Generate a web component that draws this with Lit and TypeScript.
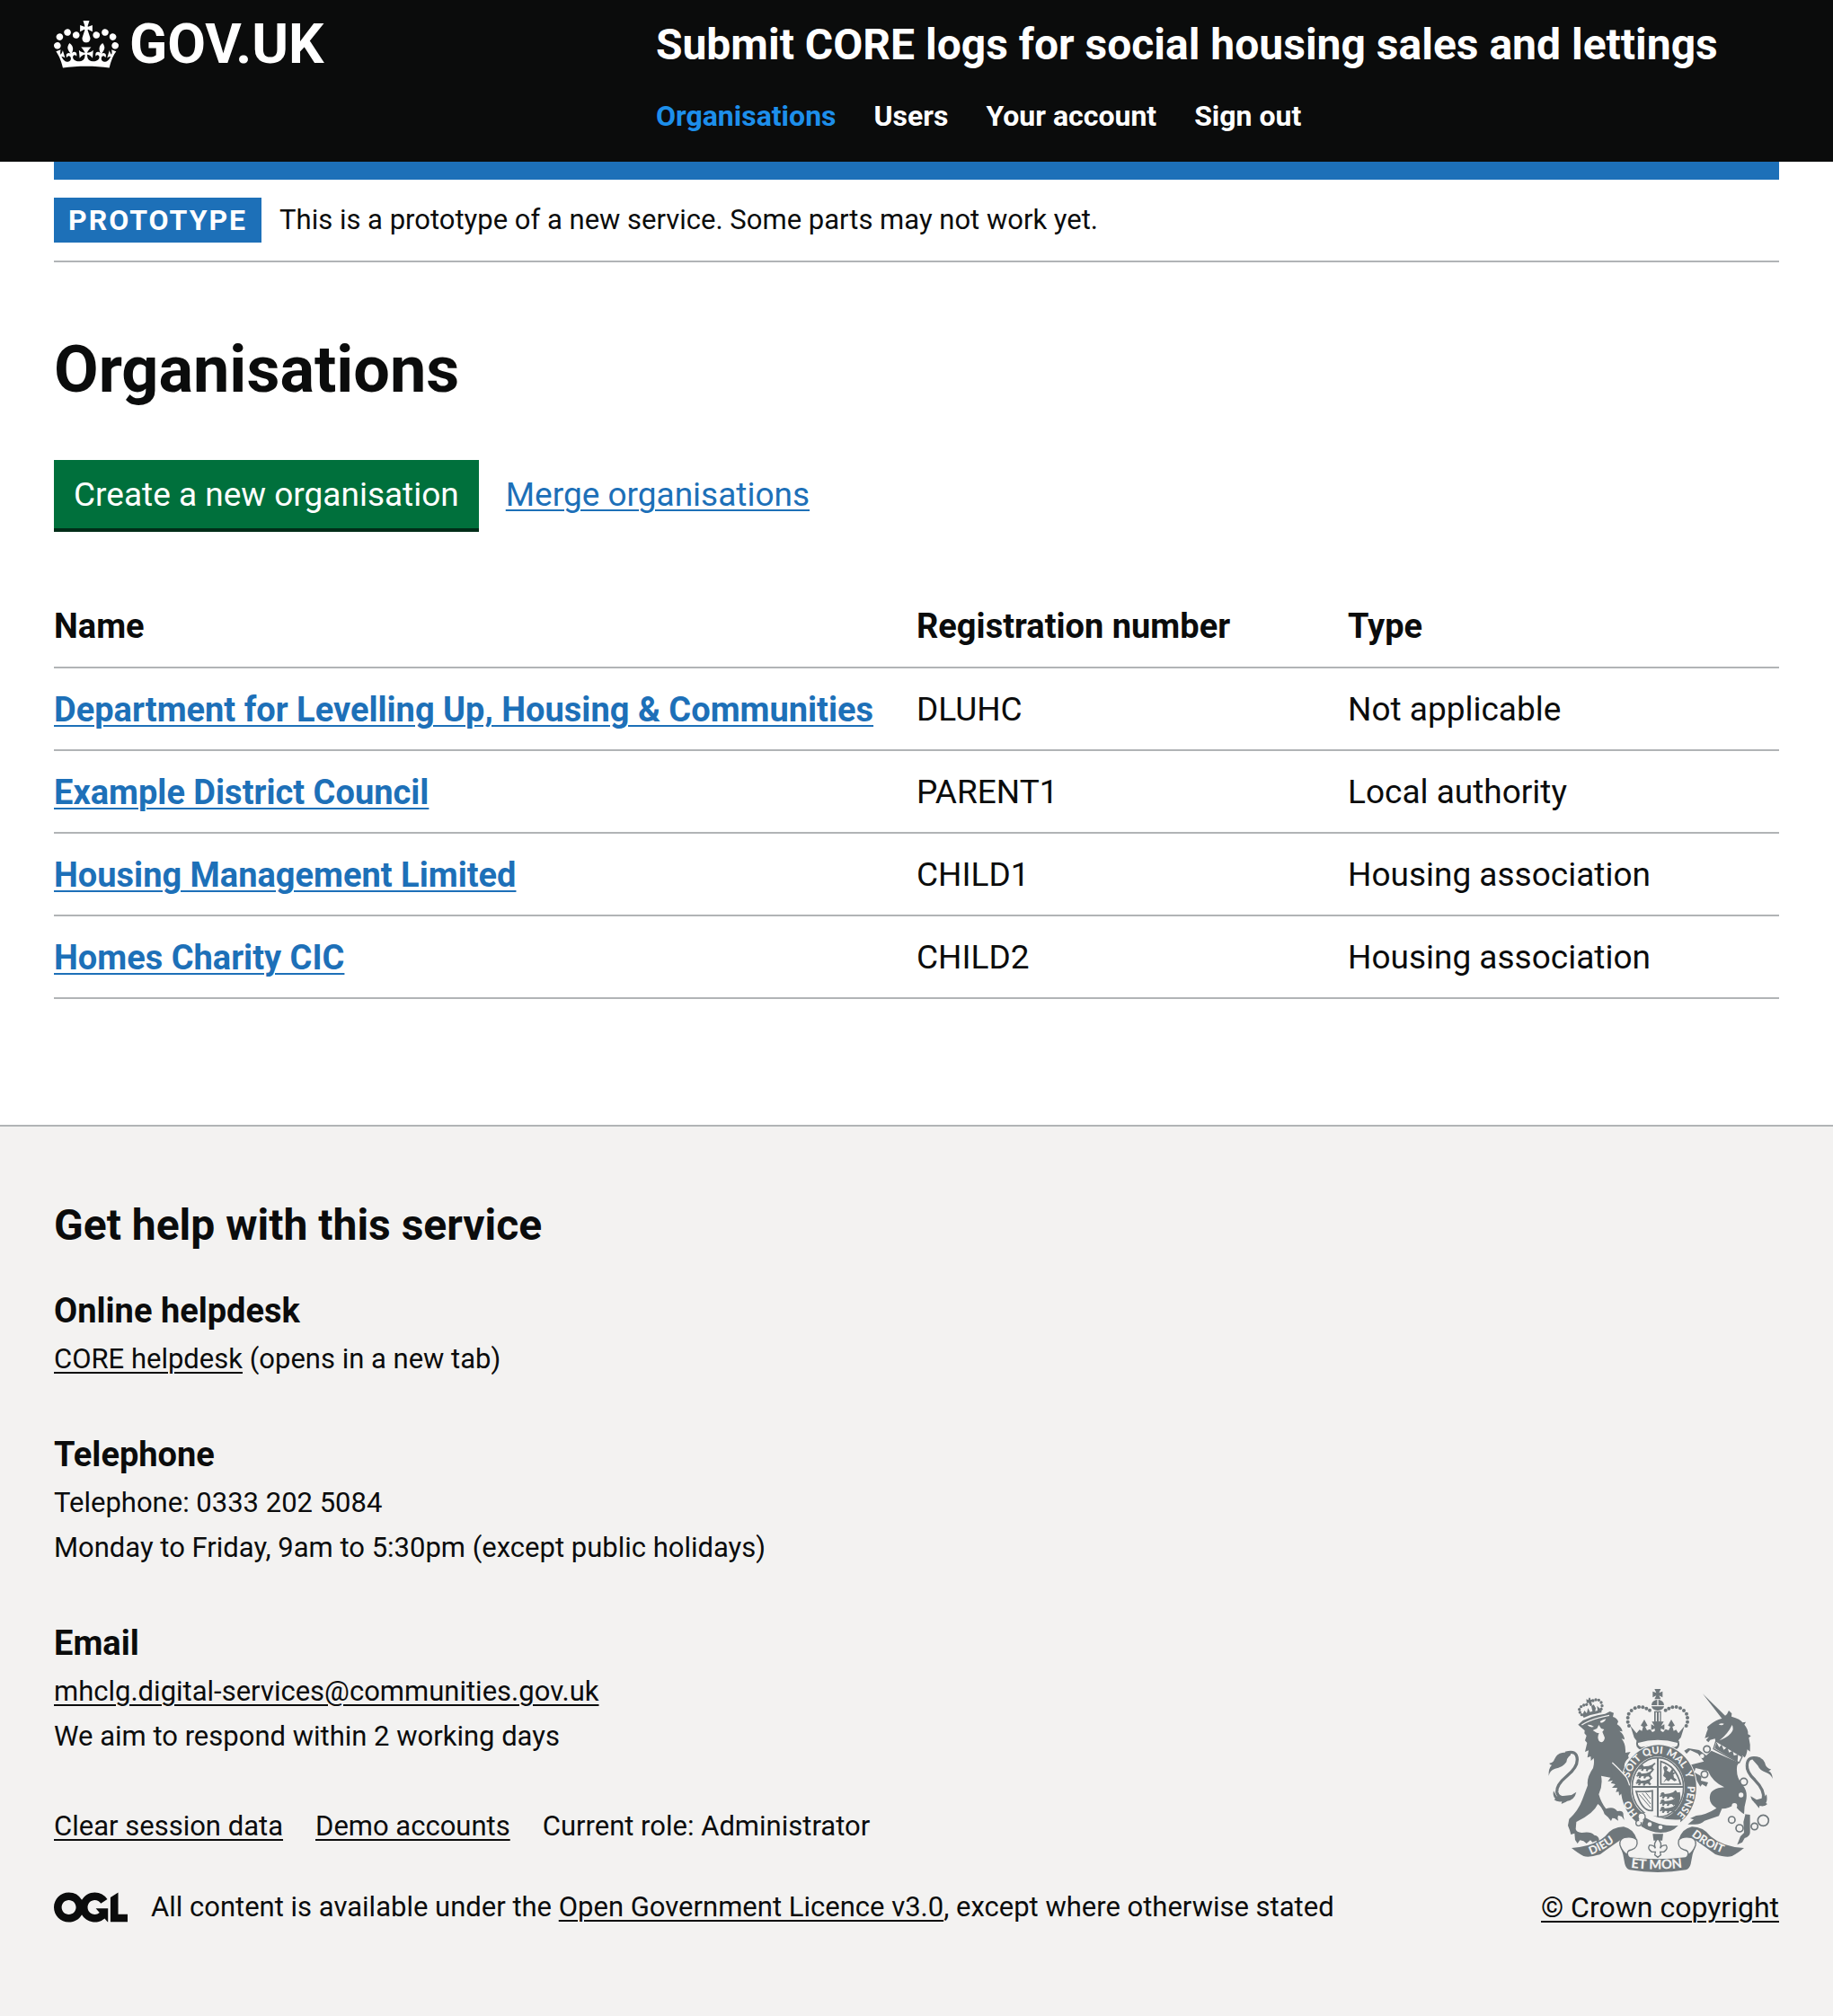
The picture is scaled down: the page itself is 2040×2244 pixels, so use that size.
import { LitElement, html, css, svg } from "lit";
import { customElement, state } from "lit/decorators.js";
import { classMap } from "lit/directives/class-map.js";

interface Organisation {
  name: string;
  registration: string;
  type: string;
}

const NAV_ITEMS = ["Organisations", "Users", "Your account", "Sign out"];

const ORGANISATIONS: Organisation[] = [
  { name: "Department for Levelling Up, Housing & Communities", registration: "DLUHC", type: "Not applicable" },
  { name: "Example District Council", registration: "PARENT1", type: "Local authority" },
  { name: "Housing Management Limited", registration: "CHILD1", type: "Housing association" },
  { name: "Homes Charity CIC", registration: "CHILD2", type: "Housing association" },
];

@customElement("crown-logo")
export class CrownLogo extends LitElement {
  static styles = css`
    :host {
      display: block;
      flex: none;
    }
    .crown {
      display: block;
      width: 72px;
      height: 53px;
      fill: currentColor;
    }
  `;

  render() {
    return html`<svg class="crown" viewBox="0 0 132 97" aria-hidden="true">
      <path
        fill-rule="evenodd"
        d="M25 30.2c3.5 1.5 7.7-.2 9.1-3.7 1.5-3.6-.2-7.8-3.9-9.2-3.6-1.4-7.6.3-9.1 3.9-1.4 3.5.3 7.5 3.9 9zM9 39.5c3.6 1.5 7.8-.2 9.2-3.7 1.5-3.6-.2-7.8-3.9-9.1-3.6-1.5-7.6.2-9.1 3.8-1.4 3.5.3 7.5 3.8 9zM4.4 57.2c3.5 1.5 7.7-.2 9.1-3.8 1.5-3.6-.2-7.7-3.9-9.1-3.5-1.5-7.6.3-9.1 3.8-1.4 3.5.3 7.6 3.9 9.1zm38.3-21.4c3.5 1.5 7.7-.2 9.1-3.8 1.5-3.6-.2-7.7-3.9-9.1-3.6-1.5-7.6.3-9.1 3.8-1.3 3.6.4 7.7 3.9 9.1zm64.4-5.6c-3.6 1.5-7.8-.2-9.1-3.7-1.5-3.6.2-7.8 3.8-9.2 3.6-1.4 7.7.3 9.2 3.9 1.3 3.5-.4 7.5-3.9 9zm15.9 9.3c-3.6 1.5-7.7-.2-9.1-3.7-1.5-3.6.2-7.8 3.7-9.1 3.6-1.5 7.7.2 9.2 3.8 1.5 3.5-.3 7.5-3.8 9zm4.7 17.7c-3.6 1.5-7.8-.2-9.2-3.8-1.5-3.6.2-7.7 3.9-9.1 3.6-1.5 7.7.3 9.2 3.8 1.3 3.5-.4 7.6-3.9 9.1zM89.3 35.8c-3.6 1.5-7.8-.2-9.2-3.8-1.4-3.6.2-7.7 3.9-9.1 3.6-1.5 7.7.3 9.2 3.8 1.4 3.6-.3 7.7-3.9 9.1zM69.7 17.7l8.9 4.7V9.3l-8.9 2.8c-.2-.3-.5-.6-.9-.9L72.4 0H59.6l3.5 11.2c-.3.3-.6.5-.9.9l-8.8-2.8v13.1l8.8-4.7c.3.3.6.7.9.9l-5 15.4v.1c-.2.8-.4 1.6-.4 2.4 0 4.1 3.1 7.5 7 8.1h.2c.3 0 .7.1 1 .1.4 0 .7 0 1-.1h.2c4-.6 7.1-4.1 7.1-8.1 0-.8-.1-1.7-.4-2.4V34l-5.1-15.4c.4-.2.7-.6 1-.9zM66 92.8c16.9 0 32.8 1.1 47.1 3.2 4-16.9 8.9-26.7 14-33.5l-9.6-3.4c1 4.9 1.1 7.2 0 10.2-1.5-1.4-3-4.3-4.2-8.7L108.6 76c2.8-2 5-3.2 7.5-3.3-4.4 9.4-10 11.9-13.6 11.2-4.3-.8-6.3-4.6-5.6-7.9 1-4.7 5.7-5.9 8-.5 4.3-8.7-3-11.4-7.6-8.8 7.1-7.2 7.9-13.5 2.1-21.1-8 6.1-8.1 12.3-4.5 20.8-4.7-5.4-12.1-2.5-9.5 6.2 3.4-5.2 7.9-2 7.2 3.1-.6 4.3-6.4 7.8-13.5 7.2-10.3-.9-10.9-8-11.2-13.8 2.5-.5 7.1 1.8 11 7.3L80.2 60c-4.1 4.4-8 5.3-12.3 5.4 1.4-4.4 8-11.6 8-11.6H55.5s6.4 7.2 7.9 11.6c-4.2-.1-8-1-12.3-5.4l1.4 16.4c3.9-5.5 8.5-7.7 10.9-7.3-.3 5.8-.9 12.8-11.1 13.8-7.2.6-12.9-2.9-13.5-7.2-.7-5 3.8-8.3 7.1-3.1 2.7-8.7-4.6-11.6-9.4-6.2 3.7-8.5 3.6-14.7-4.6-20.8-5.8 7.6-5 13.9 2.2 21.1-4.7-2.6-11.9.1-7.7 8.8 2.3-5.5 7.1-4.2 8.1.5.7 3.3-1.3 7.1-5.7 7.9-3.5.7-9-1.8-13.5-11.2 2.5.1 4.7 1.3 7.5 3.3l-4.7-15.4c-1.2 4.4-2.7 7.2-4.3 8.7-1.1-3-.9-5.3 0-10.2l-9.5 3.4c5 6.9 9.9 16.7 14 33.5 14.8-2.1 30.8-3.2 47.7-3.2z"
      ></path>
    </svg>`;
  }
}

@customElement("ogl-logo")
export class OglLogo extends LitElement {
  static styles = css`
    :host {
      display: block;
      flex: none;
    }
    .ogl {
      display: block;
      width: 82px;
      height: 34px;
      fill: currentColor;
    }
  `;

  render() {
    return html`<svg class="ogl" viewBox="0 0 483.2 195.7" aria-hidden="true">
      <path
        d="M421.5 142.8V.1l-50.7 32.3v161.1h112.4v-50.7zm-122.3-9.6A47.12 47.12 0 0 1 221 97.8c0-26 21.1-47.1 47.1-47.1 16.7 0 31.4 8.7 39.7 21.8l42.7-27.2A97.63 97.63 0 0 0 268.1 0c-36.5 0-68.3 20.1-85.1 49.7A98 98 0 0 0 97.8 0C43.9 0 0 43.9 0 97.8s43.9 97.8 97.8 97.8c36.5 0 68.3-20.1 85.1-49.7a97.76 97.76 0 0 0 149.6 25.4l19.4 22.2h3v-87.8h-80l24.3 27.5zM97.8 145c-26 0-47.1-21.1-47.1-47.1s21.1-47.1 47.1-47.1 47.1 21.1 47.1 47.1S123.8 145 97.8 145"
      ></path>
    </svg>`;
  }
}

/* Beads along the two arches of the large crown. */
const CROWN_BEADS: [number, number][] = [
  [342, 183], [338, 170], [338, 156], [341, 143], [350, 132], [362, 124], [375, 120], [388, 121], [400, 125], [411, 131],
  [533, 183], [537, 170], [537, 156], [534, 143], [525, 132], [513, 124], [500, 120], [487, 121], [475, 125], [464, 131],
];

const LION_CROWN_BEADS: [number, number][] = [
  [184, 146], [178, 138], [176, 128], [182, 119], [191, 114], [200, 112],
  [249, 127], [252, 116], [249, 105], [241, 97], [231, 96], [222, 99],
];

@customElement("royal-crest")
export class RoyalCrest extends LitElement {
  static styles = css`
    :host {
      display: block;
    }
    .crest {
      display: block;
      width: 250px;
      height: 204px;
      fill: #6f777b;
      stroke: none;
    }
    .paper {
      fill: #f3f2f1;
    }
    .line {
      fill: none;
      stroke: #6f777b;
      stroke-width: 5;
    }
    .tail {
      fill: none;
      stroke: #6f777b;
      stroke-width: 10;
    }
    .thin {
      fill: none;
      stroke: #6f777b;
      stroke-width: 3;
    }
    .outlined {
      fill: #f3f2f1;
      stroke: #6f777b;
      stroke-width: 4;
    }
    .paper-line {
      fill: none;
      stroke: #f3f2f1;
      stroke-width: 4;
    }
    .halo {
      stroke: #f3f2f1;
      stroke-width: 6;
      paint-order: stroke;
    }
    .motto {
      fill: #f3f2f1;
      font: 900 34px Lato, sans-serif;
    }
    .motto-side {
      fill: #f3f2f1;
      font: 900 38px Lato, sans-serif;
    }
    .motto-wide {
      fill: #f3f2f1;
      font: 900 44px Lato, sans-serif;
    }
  `;

  private passant(x: number, y: number) {
    return svg`<path transform="translate(${x} ${y})" d="M0 8l6-7 7 1 2 5 16-2 12-4 8-7 4 3-8 8-2 6 5 6-5 5-6-6-8 1-3 6-6-1 2-6-8-1-4 7-6-1 2-7-7 3-3-4 6-4z"></path>`;
  }

  render() {
    return html`<svg class="crest" viewBox="72 60 750 612" aria-hidden="true">
      <!-- lion: crown -->
      ${LION_CROWN_BEADS.map(([x, y]) => svg`<circle cx=${x} cy=${y} r="5"></circle>`)}
      <path d="M186 148l7-16 8 9 4-17 7 13 8-3-4-16 8-6 7 12-2 10 8-2-2-16 10 10 6-6-1 19q-34 4-59 17z"></path>
      <path d="M199 94l7 3 2-8 4 0 2 8 7-3 1 8-6 1 3 12-6 3-6-12-6 2z"></path>
      <!-- lion: tail -->
      <path class="tail" d="M130 274q38-12 39 22 0 26-34 54-36 30-34 54 4 24 42 18"></path>
      <path d="M74 350q-2-24 10-36-8-2-8-6 12 0 17-13 8-20 26-22l24-3q10 8-2 16-8 8-8 18-14 20-38 22-18 6-21 24z"></path>
      <path d="M90 400l10 18 16 0 34-4 16-10q-6 26-30 30-14 8-20 9l2-7q-18 2-26-6l4-4q-10-8-6-26z"></path>
      <!-- lion: head, mane, body and hind legs -->
      <path
        d="M172 179l16-14q34-17 74-22l16-8 13 5-3 13q14 4 18 16l-4 9q16 10 18 24l-10-2q16 12 17 29l-10-3q13 16 13 38l0 9 17-3-8 12 2 8q-18 16-14 32l20 26 6 28-6 14 2 18-10 9-9-13-10 12-8-14-14 2 5-14-18 0 12-12-16-4 7-9-17 4 9-13-31-6q6 32-8 62 8 28 24 48 26-10 38 8 22-4 20 14l3 16-8-12-12-4-2 8 2 10-12-8-8-1-4 10-10-13-12-10q-8-24-22-34-14 32-72 60l-2 24q2 10 20 12 30-6 42 8 14 2 16 14l-1 13-9-8-12 5-7-7-13 11-10-8-12-3-8 11-8-12-2-22-12 4-4-14-6-16 4-22q30-26 44-64l18-48q-4-26 18-58 5-18 2-33l-9 9-1-15-11 4 4-24-12 5 7-30-7-8 5-16-7-8 1-9z"
      ></path>
      <path
        class="paper"
        d="M203 180q10-2 22 6-14 4-22-6zm42-12q10-6 20-8-4 12-17 13zm-24 30l14-6 6-12 8 12 10 3-6 8 8 20q-2 14-11 15-11-2-12-16 0-8 4-14l-8-2z"
      ></path>
      <path class="paper-line" d="M184 180q30-20 92-32"></path>
      <!-- unicorn: tail -->
      <path class="tail" d="M780 294q-42-14-44 20-2 24 26 50 34 34 28 64-4 14-28 8"></path>
      <path
        d="M821 360q0-20-13-26 6-2 8-6-14-4-18-14-6-22-20-24l-22-4q-6 8 4 16l12 14q8 18 26 22 18 6 23 22zM801 412l-9 10-10 4-14 4-20-12q2 14 14 22l14 18 2-8q18 4 26-6l-5-3q6-10 2-29z"
      ></path>
      <!-- unicorn: body and legs -->
      <path
        d="M617 266L709 306L703 316Q697 354 722 382Q740 404 732 434Q726 452 726 478L746 480L746 540Q745 552 728 558L720 572L703 580L714 552L726 540L724 504L730 480Q706 466 694 446Q676 458 652 460L642 484L594 500Q582 512 562 512L538 512L558 496L546 492L566 483Q600 480 634 458Q608 442 612 418Q614 392 660 388Q620 370 606 334L564 324L560 338L584 352L582 366L606 372L600 386L586 378L580 386L568 366L560 350L548 352L542 362L538 350L546 334L538 316L592 302L572 276L546 264L534 276L526 266L540 258L576 264L600 282Z"
      ></path>
      <!-- unicorn: horn, head and mane -->
      <path
        d="M588 76l78 76-12 9zM601 205l4-10-2-8q22-20 38-25l12-4 16-14 6-12 10 10-1 10q30 8 37 20l11-2-5 9q14 16 12 32l10 6-7 6q6 22 4 46l-9-7q-2 18-9 27l-8-7-14 16-10-2q-4-16-20-22l-45-30q0-10-2-18l-16 4-6 8-8-8 10-10-14 4z"
      ></path>
      <path class="paper" d="M641 178q10-6 18-2-6 8-18 2zm45 2q8 14-4 28-12 14-38 24 28-22 42-52z"></path>
      <path class="outlined" d="M632 234l88 52-10 20-86-46z"></path>
      <path d="M628 258l6-20 9 17 8-9 7 17 12-9 6 18 12-6 4 16 14-3-2 24z"></path>
      <g class="paper">
        <circle cx="586" cy="284" r="7"></circle>
        <circle cx="594" cy="345" r="12"></circle>
        <circle cx="716" cy="414" r="8"></circle>
        <circle cx="694" cy="450" r="9"></circle>
      </g>
      <g class="line">
        <circle cx="602" cy="261" r="11"></circle>
        <circle cx="594" cy="345" r="11"></circle>
        <circle cx="725" cy="370" r="12"></circle>
        <circle cx="685" cy="497" r="11"></circle>
        <circle cx="711" cy="525" r="12"></circle>
        <circle cx="761" cy="519" r="11"></circle>
        <circle cx="790" cy="499" r="18"></circle>
      </g>
      <!-- large crown -->
      ${CROWN_BEADS.map(([x, y]) => svg`<circle cx=${x} cy=${y} r="6"></circle>`)}
      <path d="M427 60h21l-6 13 12-5v20l-12-6 6 12h-21l6-12-12 6V68l12 5zM438 95q20 2 21 19h-42q1-17 21-19z"></path>
      <path d="M417 118h42q-2 12-21 14-19-2-21-14zM426 134h23v36h-23z"></path>
      <path class="paper-line" d="M438 94v20M433 138v30M443 138v30"></path>
      <path
        d="M347 184l20 24 10-12 8 4 4-14-8-4 12-20 11 20-8 4 6 12 10-4 8 10 8-4v-8l-12 5v-19l11 6-9-15h40l-9 15 11-6v19l-12-5v8l8 4 8-10 10 4 6-12-8-4 11-20 12 20-8 4 4 14 8-4 8 12 20-24-12 38q-8 8-9 12H368q-6-8-9-12z"
      ></path>
      <path d="M367 234q70-22 142 0 6 24-16 30-50-16-112 0-20-10-14-30z"></path>
      <path class="paper" d="M372 240q66-20 132 0 2 12-10 14-56-12-112 0-12-4-10-14z"></path>
      <!-- garter -->
      <path class="halo" fill-rule="evenodd" d="M440 247a126 142 0 1 0 1 0zM438 286a90 103 0 1 1-1 0z"></path>
      <ellipse class="line" cx="438" cy="389" rx="86" ry="99"></ellipse>
      <path id="garter" fill="none" d="M438 506A97 112 0 0 1 438 276A97 112 0 0 1 438 506"></path>
      <g class="motto">
        <text><textPath href="#garter" startOffset="11%">HO</textPath></text>
        <text><textPath href="#garter" startOffset="30%">SOIT</textPath></text>
        <text><textPath href="#garter" startOffset="43%">QUI</textPath></text>
        <text><textPath href="#garter" startOffset="54%">MAL</textPath></text>
        <text><textPath href="#garter" startOffset="67%">Y</textPath></text>
        <text><textPath href="#garter" startOffset="74%">PENSE</textPath></text>
      </g>
      <!-- shield quarters -->
      <path d="M435 290h6v94h84v6h-84v98h-6v-98h-84v-6h84z"></path>
      <path class="line" d="M448 378v-76q50 14 66 76z"></path>
      ${this.passant(376, 312)} ${this.passant(368, 336)} ${this.passant(366, 360)}
      ${this.passant(446, 404)} ${this.passant(446, 428)} ${this.passant(446, 452)}
      <path
        d="M458 370l8-12-10-8 4-14-4-14 8-6 8 8-4 8 10 6 8-12 6 4-4 8 10 2-8 6 2 10 10 8-8 4-12-8-8 8-8-4-8 8z"
      ></path>
      <path class="line" d="M366 402q34 2 54-2l0 66q-36 4-54-64z"></path>
      <path class="thin" d="M376 412l38 44M386 408l28 36M398 406l16 20"></path>
      <path d="M496 398l8 8 8-2 2 20-8 30-10 12-6-8 6-10-8-10 8-10-8-12z"></path>
      <!-- belt strap and buckle -->
      <path class="paper" d="M382 478l20-6q40 28 112 24l-4 34-40 22-60-4-46-24z"></path>
      <path d="M394 488q50 32 112 28-22 24-58 24-36-2-66-22z"></path>
      <circle class="outlined" cx="384" cy="486" r="12"></circle>
      <circle class="outlined" cx="374" cy="508" r="9"></circle>
      <g class="paper">
        <circle cx="411" cy="512" r="7"></circle>
        <circle cx="447" cy="522" r="7"></circle>
        <circle cx="382" cy="498" r="7"></circle>
      </g>
      <!-- lion's paw over the garter -->
      <path d="M282 304q44 30 60 74l6 20-5 18-8-8-6 10-8-12-12 10-2-18-20-36z"></path>
      <path class="paper-line" d="M286 306q30 28 48 50 6 12 10 26"></path>
      <!-- pendant -->
      <path d="M421 544h35l-3 22h-29z"></path>
      <path
        class="outlined"
        d="M438 560q16 14 8 32 6-12 20-10 8 12-8 22l-12 0 2 10-10 8-10-8 2-10-12 0q-16-10-8-22 14-2 20 10-8-18 8-32z"
      ></path>
      <!-- ribbon -->
      <path
        d="M150 591Q220 588 262 552Q286 520 324 520Q356 526 368 562Q350 550 326 556Q290 580 246 612Q210 624 190 618Q174 610 150 591Z"
      ></path>
      <path
        d="M726 591Q656 588 614 552Q590 520 552 520Q520 526 508 562Q526 550 550 556Q586 580 630 612Q666 624 686 618Q702 610 726 591Z"
      ></path>
      <path class="outlined" d="M326 556Q308 562 312 582Q318 602 338 616Q332 600 350 597Q374 590 368 564Q354 550 326 556Z"></path>
      <path class="outlined" d="M550 556Q568 562 564 582Q558 602 538 616Q544 600 526 597Q502 590 508 564Q522 550 550 556Z"></path>
      <path d="M312 582Q322 608 346 622Q438 634 530 622Q554 608 564 582Q552 612 548 644Q544 660 532 664Q438 680 344 664Q332 660 328 644Q324 612 312 582Z"></path>
      <path id="ribbon-left" fill="none" d="M214 614Q272 592 318 550"></path>
      <path id="ribbon-middle" fill="none" d="M348 656Q438 668 530 655"></path>
      <path id="ribbon-right" fill="none" d="M550 550Q602 592 680 618"></path>
      <text class="motto-side"><textPath href="#ribbon-left">DIEU</textPath></text>
      <text class="motto-wide"><textPath href="#ribbon-middle">ET MON</textPath></text>
      <text class="motto-side"><textPath href="#ribbon-right">DROIT</textPath></text>
    </svg>`;
  }
}

@customElement("app-root")
export class AppRoot extends LitElement {
  @state() private current = "Organisations";

  static styles = css`
    :host {
      display: block;
      color: #0b0c0c;
      background: #ffffff;
      font-family: Roboto, Arial, sans-serif;
      font-size: 31px;
      line-height: 50px;
    }
    h1,
    h2,
    h3,
    p,
    ul {
      margin: 0;
      padding: 0;
    }
    ul {
      list-style: none;
    }
    a {
      color: inherit;
      text-decoration-thickness: 2px;
      text-underline-offset: 4px;
    }
    .container {
      margin: 0 60px;
    }

    .header {
      background: #0b0c0c;
      color: #ffffff;
    }
    .header-row {
      display: flex;
      padding: 20px 0 26px;
    }
    .header-logo {
      flex: 0 0 33.33%;
    }
    .header-content {
      flex: 1;
      padding-left: 30px;
    }
    .home {
      display: inline-flex;
      align-items: center;
      gap: 12px;
      font-size: 62px;
      font-weight: bold;
      line-height: 58px;
      text-decoration: none;
    }
    .service {
      display: block;
      font-size: 48px;
      font-weight: bold;
      line-height: 60px;
      text-decoration: none;
    }
    .nav {
      display: flex;
      flex-wrap: wrap;
      gap: 0 42px;
      margin-top: 24px;
      font-size: 32px;
      font-weight: bold;
    }
    .nav a {
      text-decoration: none;
    }
    .nav .active {
      color: #1d8feb;
    }

    .phase {
      display: flex;
      align-items: flex-start;
      gap: 20px;
      padding: 20px 0;
      border-top: 20px solid #1d70b8;
      border-bottom: 2px solid #b1b4b6;
    }
    .tag {
      padding: 0 16px;
      background: #1d70b8;
      color: #ffffff;
      font-size: 32px;
      font-weight: bold;
      letter-spacing: 2px;
      text-transform: uppercase;
    }

    .main {
      padding: 80px 0 140px;
    }
    .title {
      margin-bottom: 60px;
      font-size: 72px;
      line-height: 80px;
    }
    .actions {
      display: flex;
      flex-wrap: wrap;
      align-items: baseline;
      gap: 30px;
      margin-bottom: 64px;
      font-size: 37px;
    }
    .button {
      padding: 14px 22px 12px;
      border: 0;
      background: #00703c;
      box-shadow: 0 4px 0 #002d18;
      color: #ffffff;
      font: inherit;
      cursor: pointer;
    }
    .link {
      color: #1d70b8;
    }

    .table {
      width: 100%;
      border-collapse: separate;
      border-spacing: 0;
      table-layout: fixed;
      font-size: 37px;
      text-align: left;
    }
    .table th,
    .table td {
      box-sizing: border-box;
      padding: 20px 20px 20px 0;
      border-bottom: 2px solid #b1b4b6;
      vertical-align: top;
    }
    .table tbody th,
    .table tbody td {
      padding-top: 21px;
      padding-bottom: 19px;
    }
    .table th {
      font-size: 38px;
      font-weight: bold;
    }
    .wide {
      width: 50%;
    }
    .narrow {
      width: 25%;
    }

    .footer {
      padding: 80px 0 96px;
      border-top: 2px solid #b1b4b6;
      background: #f3f2f1;
    }
    .footer-row {
      display: flex;
      align-items: flex-end;
      justify-content: space-between;
      gap: 60px;
    }
    .help-title {
      margin-bottom: 40px;
      font-size: 48px;
      line-height: 60px;
    }
    .help-group {
      margin-bottom: 56px;
    }
    .help-group h3 {
      margin-bottom: 4px;
      font-size: 38px;
    }
    .footer-links {
      display: flex;
      flex-wrap: wrap;
      gap: 0 36px;
      margin: -6px 0 40px;
    }
    .licence {
      display: flex;
      align-items: center;
      gap: 26px;
    }
    .copyright {
      display: flex;
      flex: none;
      flex-direction: column;
      align-items: center;
      gap: 14px;
      font-size: 32px;
    }
  `;

  private select(event: Event, item: string) {
    event.preventDefault();
    this.current = item;
  }

  private renderHeader() {
    return html`<header class="header">
      <div class="container header-row">
        <div class="header-logo">
          <a class="home" href="#"><crown-logo></crown-logo><span>GOV.UK</span></a>
        </div>
        <div class="header-content">
          <a class="service" href="#">Submit CORE logs for social housing sales and lettings</a>
          <nav>
            <ul class="nav">
              ${NAV_ITEMS.map(
                (item) => html`<li>
                  <a
                    href="#"
                    class=${classMap({ active: item === this.current })}
                    @click=${(event: Event) => this.select(event, item)}
                    >${item}</a
                  >
                </li>`
              )}
            </ul>
          </nav>
        </div>
      </div>
    </header>`;
  }

  private renderTable() {
    return html`<table class="table">
      <thead>
        <tr>
          <th scope="col" class="wide">Name</th>
          <th scope="col" class="narrow">Registration number</th>
          <th scope="col" class="narrow">Type</th>
        </tr>
      </thead>
      <tbody>
        ${ORGANISATIONS.map(
          (org) => html`<tr>
            <th scope="row"><a class="link" href="#">${org.name}</a></th>
            <td>${org.registration}</td>
            <td>${org.type}</td>
          </tr>`
        )}
      </tbody>
    </table>`;
  }

  private renderFooter() {
    return html`<footer class="footer">
      <div class="container footer-row">
        <div>
          <h2 class="help-title">Get help with this service</h2>
          <section class="help-group">
            <h3>Online helpdesk</h3>
            <p><a href="#">CORE helpdesk</a> (opens in a new tab)</p>
          </section>
          <section class="help-group">
            <h3>Telephone</h3>
            <p>Telephone: 0333 202 5084</p>
            <p>Monday to Friday, 9am to 5:30pm (except public holidays)</p>
          </section>
          <section class="help-group">
            <h3>Email</h3>
            <p><a href="mailto:mhclg.digital-services@communities.gov.uk">mhclg.digital-services@communities.gov.uk</a></p>
            <p>We aim to respond within 2 working days</p>
          </section>
          <ul class="footer-links">
            <li><a href="#">Clear session data</a></li>
            <li><a href="#">Demo accounts</a></li>
            <li>Current role: Administrator</li>
          </ul>
          <div class="licence">
            <ogl-logo></ogl-logo>
            <p>
              All content is available under the
              <a href="#">Open Government Licence v3.0</a>, except where otherwise stated
            </p>
          </div>
        </div>
        <div class="copyright">
          <royal-crest></royal-crest>
          <a href="#">© Crown copyright</a>
        </div>
      </div>
    </footer>`;
  }

  render() {
    return html`
      ${this.renderHeader()}
      <div class="container">
        <div class="phase">
          <strong class="tag">Prototype</strong>
          <span>This is a prototype of a new service. Some parts may not work yet.</span>
        </div>
        <main class="main">
          <h1 class="title">Organisations</h1>
          <div class="actions">
            <button class="button" type="button">Create a new organisation</button>
            <a class="link" href="#">Merge organisations</a>
          </div>
          ${this.renderTable()}
        </main>
      </div>
      ${this.renderFooter()}
    `;
  }
}
